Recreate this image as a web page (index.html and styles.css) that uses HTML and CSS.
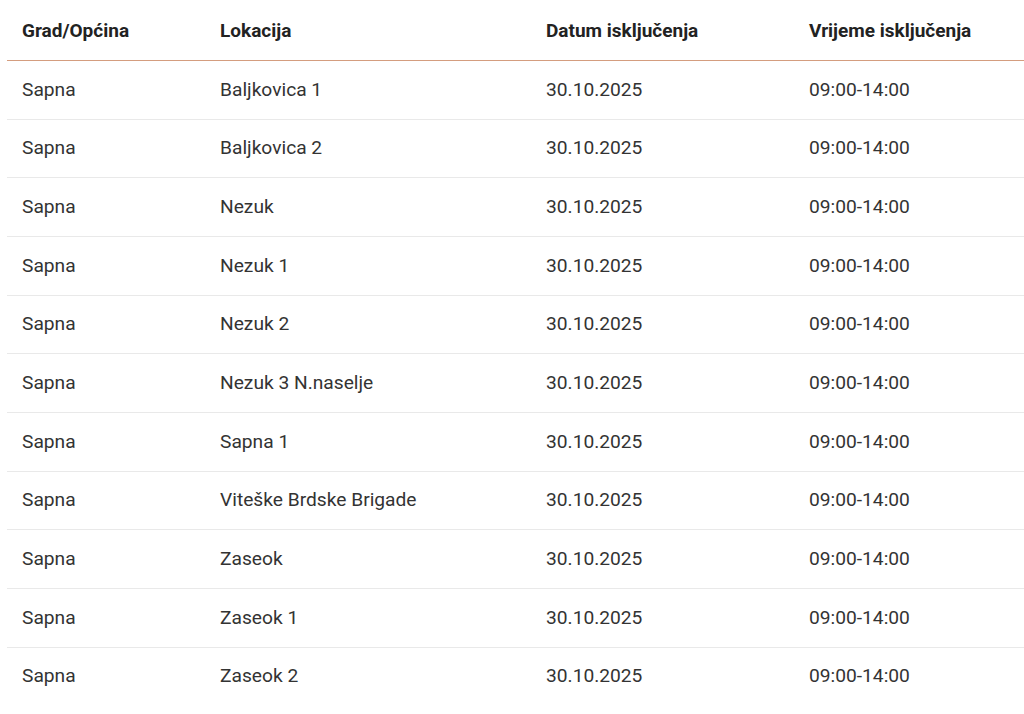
FILE: index.html
```html
<!DOCTYPE html>
<html lang="bs">
<head>
<meta charset="utf-8">
<title>Isključenja</title>
<link rel="stylesheet" href="styles.css">
</head>
<body>
<table class="outages">
  <colgroup>
    <col class="c1"><col class="c2"><col class="c3"><col class="c4">
  </colgroup>
  <thead>
    <tr><th>Grad/Općina</th><th>Lokacija</th><th>Datum isključenja</th><th>Vrijeme isključenja</th></tr>
  </thead>
  <tbody>
    <tr><td>Sapna</td><td>Baljkovica 1</td><td>30.10.2025</td><td>09:00-14:00</td></tr>
    <tr><td>Sapna</td><td>Baljkovica 2</td><td>30.10.2025</td><td>09:00-14:00</td></tr>
    <tr><td>Sapna</td><td>Nezuk</td><td>30.10.2025</td><td>09:00-14:00</td></tr>
    <tr><td>Sapna</td><td>Nezuk 1</td><td>30.10.2025</td><td>09:00-14:00</td></tr>
    <tr><td>Sapna</td><td>Nezuk 2</td><td>30.10.2025</td><td>09:00-14:00</td></tr>
    <tr><td>Sapna</td><td>Nezuk 3 N.naselje</td><td>30.10.2025</td><td>09:00-14:00</td></tr>
    <tr><td>Sapna</td><td>Sapna 1</td><td>30.10.2025</td><td>09:00-14:00</td></tr>
    <tr><td>Sapna</td><td>Viteške Brdske Brigade</td><td>30.10.2025</td><td>09:00-14:00</td></tr>
    <tr><td>Sapna</td><td>Zaseok</td><td>30.10.2025</td><td>09:00-14:00</td></tr>
    <tr><td>Sapna</td><td>Zaseok 1</td><td>30.10.2025</td><td>09:00-14:00</td></tr>
    <tr><td>Sapna</td><td>Zaseok 2</td><td>30.10.2025</td><td>09:00-14:00</td></tr>
  </tbody>
</table>
</body>
</html>
```
FILE: styles.css
```css
html, body {
  margin: 0;
  padding: 0;
  background: #ffffff;
  overflow: hidden;
}
body {
  padding-left: 7px;
  font-family: Roboto, "Noto Sans", "Liberation Sans", sans-serif;
}
.outages {
  border-collapse: collapse;
  table-layout: fixed;
  width: 1040px;
}
.c1 { width: 198px; }
.c2 { width: 326px; }
.c3 { width: 263px; }
.c4 { width: 253px; }
.outages th {
  text-align: left;
  font-weight: 700;
  font-size: 19px;
  color: #222222;
  height: 58px;
  padding: 2px 15px 0;
  line-height: 22px;
  vertical-align: middle;
  border-bottom: 1px solid #d49d7f;
}
.outages td {
  font-size: 19.2px;
  color: #333333;
  padding: 0 15px;
  height: 57.67px;
  line-height: 22px;
  vertical-align: middle;
  border-bottom: 1px solid #e9e9e9;
}
.outages tbody tr:last-child td {
  border-bottom: none;
}
```
